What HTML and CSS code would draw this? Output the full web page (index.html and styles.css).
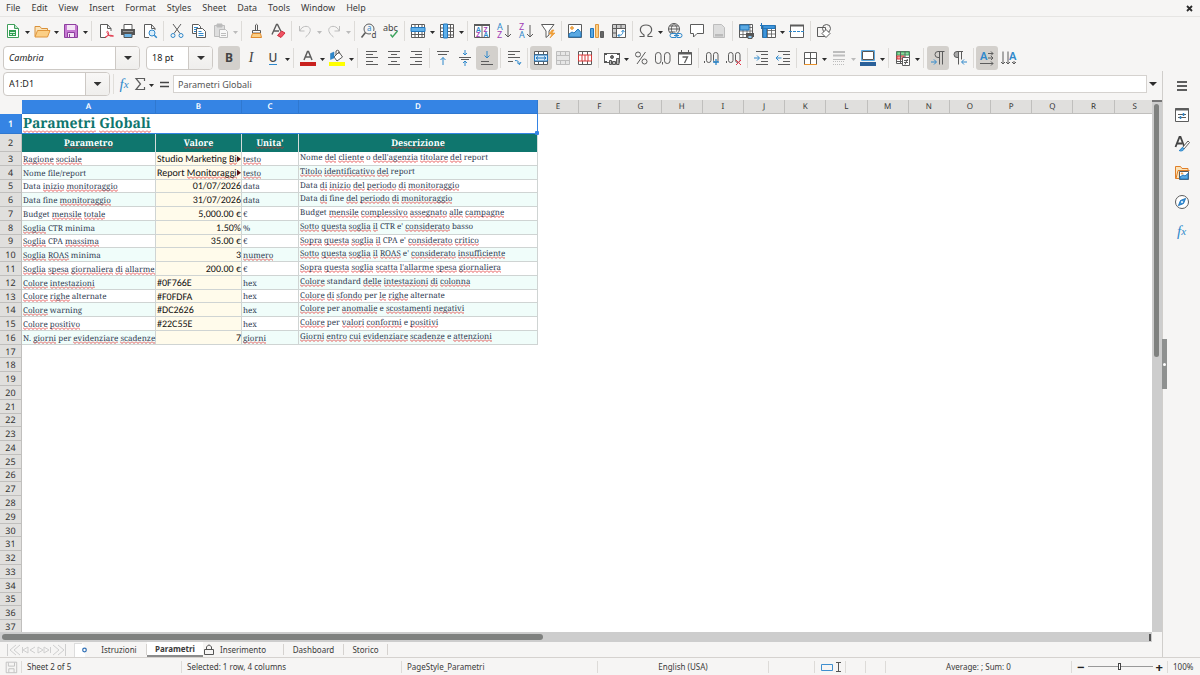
FILE: index.html
```html
<!DOCTYPE html>
<html lang="en">
<head>
<meta charset="utf-8">
<title>Parametri - Spreadsheet</title>
<link rel="stylesheet" href="styles.css">
</head>
<body>
<div class="app">
<header class="menubar">
<nav class="menus"><button>File</button><button>Edit</button><button>View</button><button>Insert</button><button>Format</button><button>Styles</button><button>Sheet</button><button>Data</button><button>Tools</button><button>Window</button><button>Help</button></nav>
<button class="close" aria-label="Close document"><svg width="7" height="7" viewBox="0 0 7 7"><path d="M1 1l5 5M6 1L1 6" stroke="#2b2b2b" stroke-width="1.8"/></svg></button>
</header>

<div class="toolbar standard">
<button class="tb" aria-label="New"><svg class="ic" viewBox="0 0 16 16"><path d="M2.500 1.500h7l4 4v9h-11z" stroke="#3f9e5a" fill="#fff"/><path d="M9.500 1.500v4h4" stroke="#3f9e5a" fill="#bfe5ca"/><path d="M4 7h7v6h-7z" fill="#2f9e50" stroke="none"/><path d="M5 9.500h5M5 11.500h2M8 11.500h2" stroke="#d7f2df"/></svg></button><button class="dd" aria-label="New options"></button>
<button class="tb" aria-label="Open"><svg class="ic" viewBox="0 0 16 16"><path d="M1 13.500V3.500h5l1.500 2h6v3" stroke="#d9913a" fill="#fbe3b9"/><path d="M1 14l2.500-6.500H16L13.500 14z" stroke="#e0963c" fill="#fbcf86"/></svg></button><button class="dd" aria-label="Open options"></button>
<button class="tb" aria-label="Save"><svg class="ic" viewBox="0 0 16 16"><path d="M1.500 1.500h11.500l1.500 1.500v11.500h-13z" stroke="#8d3f9e" fill="#c678d2"/><path d="M4 2h8v5h-8z" stroke="none" fill="#f4e4f6"/><path d="M4.500 14v-4.500h7V14" stroke="#8d3f9e" fill="#f4e4f6"/><path d="M6.500 11v3" stroke="#8d3f9e"/></svg></button><button class="dd" aria-label="Save options"></button>
<i class="sep"></i>
<button class="tb" aria-label="Export as PDF"><svg class="ic" viewBox="0 0 16 16"><path d="M8 14.500H2.500v-13h7l3.500 4V8" fill="#fff"/><path d="M9.500 1.500v4H13"/><path d="M7 14.500c3-1 4.500-4 3-6-1-.8-1.500.7-.5 2 1.500 2.500 3 3.200 6 2.500M7 14.500c2-2 5-3 8.500-1.500" stroke="#e2364a"/></svg></button>
<button class="tb" aria-label="Print"><svg class="ic" viewBox="0 0 16 16"><path d="M4 6V1.500h8V6" fill="#fff"/><path d="M1 6h14v6H1z" fill="#555" stroke="none"/><path d="M3 8.500h10" stroke="#999"/><path d="M4 10.500h8v4H4z" fill="#6db4e6" stroke="#555"/></svg></button>
<button class="tb" aria-label="Print Preview"><svg class="ic" viewBox="0 0 16 16"><path d="M7 14.500H2.500v-13h7l3.500 4V7" fill="#fff"/><path d="M9.500 1.500v4H13"/><circle cx="10" cy="10" r="3" stroke="#2f88cb" fill="#d9edfa"/><path d="M12.300 12.300l2.500 2.500" stroke="#2f88cb" stroke-width="1.500"/></svg></button>
<i class="sep"></i>
<button class="tb" aria-label="Cut"><svg class="ic" viewBox="0 0 16 16"><path d="M4 1l7 9.500M12 1L5 10.500"/><circle cx="4" cy="12.500" r="2" stroke="#2f88cb"/><circle cx="12" cy="12.500" r="2" stroke="#2f88cb"/></svg></button>
<button class="tb" aria-label="Copy"><svg class="ic" viewBox="0 0 16 16"><path d="M5 10.500H1.500v-9h6l2 2V5" fill="#fff"/><path d="M3 4.500h4M3 6.500h2M3 8.500h2" stroke="#2f88cb"/><path d="M5.500 5.500h6l3 3v6h-9z" fill="#fff"/><path d="M7.500 8.500h3M7.500 10.500h5M7.500 12.500h5" stroke="#2f88cb"/></svg></button>
<button class="tb" aria-label="Paste" disabled><svg class="ic off" viewBox="0 0 16 16"><path d="M1.500 2.500h10v11h-10z" fill="#dedede"/><path d="M4 1h5v3H4z" fill="#bbb"/><path d="M6.500 6.500h6l2 2v6h-8z" fill="#f8f8f8"/><path d="M8 10.500h5M8 12.500h5"/></svg></button><button class="dd dim" aria-label="Paste options"></button>
<i class="sep"></i>
<button class="tb" aria-label="Clone Formatting"><svg class="ic" viewBox="0 0 16 16"><path d="M7.500 7V2q1-1.500 2 0v5"/><path d="M4.500 7.500h8V10h-8z" fill="#fff"/><path d="M4.500 10.500L3 14.500h10.500l-1-4z" fill="#fbcf86" stroke="#e08a2e"/></svg></button>
<button class="tb" aria-label="Clear Formatting"><svg class="ic" viewBox="0 0 16 16"><path d="M2 11.500L6.500 1.500h1l3.500 7M4 8h5" stroke-width="1.400"/><path d="M7.500 12.500l4-4.500 3.500 2-4 4.500z" fill="#ef5363" stroke="#d02c3c"/></svg></button>
<i class="sep"></i>
<button class="tb" aria-label="Undo" disabled><svg class="ic off" viewBox="0 0 16 16"><path d="M2.500 3v5h5M3 8c2-7 12-5.500 10 .5-.7 2-2.500 4-4.500 5.500"/></svg></button><button class="dd dim" aria-label="Undo list"></button>
<button class="tb" aria-label="Redo" disabled><svg class="ic off" viewBox="0 0 16 16"><path d="M13.500 3v5h-5M13 8C11 1 1 2.500 3 8.500c.7 2 2.500 4 4.500 5.500"/></svg></button><button class="dd dim" aria-label="Redo list"></button>
<i class="sep"></i>
<button class="tb" aria-label="Find and Replace"><svg class="ic" viewBox="0 0 16 16"><circle cx="8" cy="6" r="5"/><path d="M4.500 9.500l-4 5" stroke-width="1.600"/><text x="6" y="8" class="g blue z8">a</text><rect x="10" y="8" width="6" height="8" fill="#f6f5f4" stroke="none"/><text x="10.500" y="15" class="g z8">d</text></svg></button>
<button class="tb" aria-label="Spelling"><svg class="ic" viewBox="0 0 16 16"><text x="0" y="7.500" class="g z9">abc</text><path d="M7.500 11.500l2 2.500 5-6" stroke="#3aa35c" stroke-width="1.400"/></svg></button>
<i class="sep"></i>
<button class="tb" aria-label="Row"><svg class="ic" viewBox="0 0 16 16"><path d="M1.500 1.500h13v13h-13z" fill="#fff"/><path d="M1.500 11.500h13M5 1.500v13M8.500 1.500v13M12 1.500v13"/><path d="M1 4.500h14v4H1z" fill="#5fb0ea" stroke="#2176bd"/></svg></button><button class="dd" aria-label="Row options"></button>
<button class="tb" aria-label="Column"><svg class="ic" viewBox="0 0 16 16"><path d="M1.500 1.500h13v13h-13z" fill="#fff"/><path d="M11.500 1.500v13M1.500 5h13M1.500 8.500h13M1.500 12h13"/><path d="M4.500 1h4v14h-4z" fill="#5fb0ea" stroke="#2176bd"/></svg></button><button class="dd" aria-label="Column options"></button>
<i class="sep"></i>
<button class="tb" aria-label="Sort"><svg class="ic" viewBox="0 0 16 16"><path d="M.5 1.500h15v13H.5zM8 2v12" fill="#fff"/><path d="M0 2h16" stroke-width="2"/><text x="2" y="8.500" class="g blue z7">A</text><text x="2" y="14" class="g pur z7">Z</text><text x="9.500" y="8.500" class="g pur z7">Z</text><text x="9.500" y="14" class="g blue z7">A</text></svg></button>
<button class="tb" aria-label="Sort Ascending"><svg class="ic" viewBox="0 0 16 16"><text x="1" y="7" class="g blue z9">A</text><text x="1" y="15" class="g pur z9">Z</text><path d="M12 2v12M9 11l3 3 3-3"/></svg></button>
<button class="tb" aria-label="Sort Descending"><svg class="ic" viewBox="0 0 16 16"><text x="1" y="7" class="g pur z9">Z</text><text x="1" y="15" class="g blue z9">A</text><path d="M12 2v12M9 11l3 3 3-3"/></svg></button>
<button class="tb" aria-label="AutoFilter"><svg class="ic" viewBox="0 0 16 16"><path d="M1.500 1.500h12.500L9 8v4l-3 2.500V8z" fill="#fff"/><path d="M12 7l-3 4h3l-2 4 5-5h-3l2-3z" fill="#f3a43b" stroke="#e8912a" stroke-width=".6"/></svg></button>
<i class="sep"></i>
<button class="tb" aria-label="Insert Image"><svg class="ic" viewBox="0 0 16 16"><path d="M1.500 1.500h13v13h-13z" fill="#fff"/><circle cx="5" cy="5" r="1.300" stroke="#e8912a" fill="#f7c679"/><path d="M2 14v-3l3-2 2 1 4-4 3 3.500V14z" fill="#5aa9e2" stroke="#2176bd"/></svg></button>
<button class="tb" aria-label="Insert Chart"><svg class="ic" viewBox="0 0 16 16"><path d="M1.500 5.500h3v9h-3z" fill="#5aa9e2" stroke="#2176bd"/><path d="M6.500 1.500h3v13h-3z" fill="#fbcf86" stroke="#e0963c"/><path d="M11.500 8.500h3v6h-3z" fill="#666"/></svg></button>
<button class="tb" aria-label="Insert Pivot Table"><svg class="ic" viewBox="0 0 16 16"><path d="M1.500 1.500h13v13h-13z" fill="#fff"/><path d="M2 2h12v3H2zM2 5h3v9H2z" fill="#ccc" stroke="none"/><path d="M5.500 2v12M2 5.500h12M10 2v3M2 10h3"/><path d="M7 12.500c4 0 5-1.500 5-5M10.500 9L12 7.200 13.500 9M8.500 11L7 12.500 8.500 14" stroke="#2f88cb"/></svg></button>
<i class="sep"></i>
<button class="tb" aria-label="Special Character"><svg class="ic" viewBox="0 0 16 16"><path d="M1.500 13.500H6V12C0 8 2 2 8 2s8 6 2 10v1.500h4.500" stroke-width="1.200"/></svg></button><button class="dd" aria-label="More characters"></button>
<button class="tb" aria-label="Hyperlink"><svg class="ic" viewBox="0 0 16 16"><circle cx="7" cy="6" r="5.500"/><path d="M1.500 6h11M2.500 3h9M2.500 9h6M7 .5C3.500 3 3.500 9 7 11.500M7 .5c3.500 3 3 5.500 2.500 8"/><path d="M5 10.500h4v4H5a2 2 0 010-4zM10 10.500h3a2 2 0 010 4h-3z" fill="#f6f5f4" stroke="#2f88cb"/><path d="M7 12.500h5" stroke="#2f88cb"/></svg></button>
<button class="tb" aria-label="Comment"><svg class="ic" viewBox="0 0 16 16"><path d="M1.500 1.500h13v9H8L4.500 14v-3.500h-3z" fill="#fff"/></svg></button>
<button class="tb" aria-label="Headers and Footers" disabled><svg class="ic off" viewBox="0 0 16 16"><path d="M2.500 1.500h8l3 3v10h-11z" fill="#ddd"/><path d="M4 11h8v2.500H4z" fill="#bbb" stroke="none"/></svg></button>
<i class="sep"></i>
<button class="tb" aria-label="Define Print Area"><svg class="ic" viewBox="0 0 16 16"><path d="M1.500 1.500h13v13h-13z" fill="#fff"/><path d="M1.500 8h13M1.500 11.500h13M5 1.500v13M9 1.500v13M12 1.500v13M1.500 4.500h13" stroke-width=".8"/><path d="M2 2h9v5H2z" fill="#5aa9e2" stroke="#2176bd"/><path d="M8 10h8v4H8z" fill="#555" stroke="none"/><path d="M10 12.500h4v3h-4z" fill="#8cc8f2"/></svg></button>
<button class="tb" aria-label="Freeze Rows and Columns"><svg class="ic" viewBox="0 0 16 16"><path d="M2.500 2.500h13v12h-13z" fill="#fff"/><path d="M7.500 3v12M11.500 3v12M3.500 7.500h12M3.500 11h12" stroke-width=".8"/><path d="M3 2.500h12v3H3zM3 5.500h3.500v9H3z" fill="#3f95da" stroke="#2176bd"/><path d="M1.500 0v6M0 2.500h4" stroke="#2176bd"/></svg></button><button class="dd" aria-label="Freeze options"></button>
<button class="tb" aria-label="Split Window"><svg class="ic" viewBox="0 0 16 16"><path d="M1.500 2.500h13v12h-13z" fill="#fff"/><path d="M1 2.500h14" stroke-width="2"/><path d="M0 8.500h16" stroke="#2f88cb" stroke-dasharray="3 1"/></svg></button>
<i class="sep"></i>
<button class="tb" aria-label="Show Draw Functions"><svg class="ic" viewBox="0 0 16 16"><path d="M1.500 4.500h8v9h-8z"/><circle cx="10.500" cy="5.500" r="4"/><path d="M10 6.500l4 4-4 4-4-4z" fill="#fff"/></svg></button>
</div>

<div class="toolbar format">
<label class="combo font"><select aria-label="Font Name"><option>Cambria</option></select></label>
<label class="combo size"><select aria-label="Font Size"><option>18 pt</option></select></label>
<button class="tb on" aria-label="Bold" aria-pressed="true"><b class="glyph">B</b></button>
<button class="tb" aria-label="Italic"><i class="glyph ital">I</i></button>
<button class="tb" aria-label="Underline"><span class="glyph under">U</span></button><button class="dd" aria-label="Underline options"></button>
<i class="sep"></i>
<button class="tb" aria-label="Font Color"><svg class="ic" viewBox="0 0 16 16"><path d="M4 10L7.500 1.500h1L12 10M5.500 7h5" stroke-width="1.500"/><path d="M0 12h16v4H0z" fill="#c9211e" stroke="none"/></svg></button><button class="dd" aria-label="Font Color options"></button>
<button class="tb" aria-label="Background Color"><svg class="ic" viewBox="0 0 16 16"><path d="M5 7l5-5 3.500 5L8 11z" fill="#fff"/><path d="M7 5V1q1.500-1.500 3 0v3"/><path d="M1.500 9.500V3.500L5 2v6z" fill="#2f88cb" stroke="#2176bd" stroke-width=".5"/><path d="M0 12h16v4H0z" fill="#ffff00" stroke="none"/></svg></button><button class="dd" aria-label="Background Color options"></button>
<i class="sep"></i>
<button class="tb" aria-label="Align Left"><svg class="ic" viewBox="0 0 16 16"><path d="M2 1.500h11M2 4.500h7M2 7.500h12M2 11.500h7M2 14.500h12"/></svg></button>
<button class="tb" aria-label="Center Horizontally"><svg class="ic" viewBox="0 0 16 16"><path d="M2 1.500h12M5 4.500h6M2 7.500h12M5 11.500h6M2 14.500h12"/></svg></button>
<button class="tb" aria-label="Align Right"><svg class="ic" viewBox="0 0 16 16"><path d="M3 1.500h11M7 4.500h7M2 7.500h12M7 11.500h7M2 14.500h12"/></svg></button>
<i class="sep"></i>
<button class="tb" aria-label="Align Top"><svg class="ic" viewBox="0 0 16 16"><path d="M2 1.500h12M3 4.500h9"/><path d="M8 15V7.500M5.500 10L8 7.500l2.500 2.500" class="bl"/></svg></button>
<button class="tb" aria-label="Center Vertically"><svg class="ic" viewBox="0 0 16 16"><path d="M2 7.500h12M4 9.500h8"/><path d="M8 0v5M6 3l2 2 2-2M8 16v-5M6 13l2-2 2 2" class="bl"/></svg></button>
<button class="tb on" aria-label="Align Bottom" aria-pressed="true"><svg class="ic" viewBox="0 0 16 16"><path d="M2 11.500h8M2 14.500h12"/><path d="M8 1v7M5.500 5.500L8 8l2.500-2.500" class="bl"/></svg></button>
<i class="sep"></i>
<button class="tb" aria-label="Wrap Text"><svg class="ic" viewBox="0 0 16 16"><path d="M2 1.500h12M2 4.500h7M2 7.500h12M2 11.500h5"/><path d="M9 10.500c3 0 4 1 4.500 4M11 12.500l2.500 2 1.500-2.500" class="bl"/></svg></button>
<i class="sep"></i>
<button class="tb on" aria-label="Merge and Center Cells" aria-pressed="true"><svg class="ic" viewBox="0 0 16 16"><path d="M1.500 1.500h13v13h-13zM1.500 4.500h13M1.500 11.500h13M5.500 1.500v13M10.500 1.500v13" fill="#fff"/><path d="M1.500 5h13v6h-13z" fill="#d4eafa" stroke="#2176bd"/><path d="M3 8h10M5 6.500L3 8l2 1.500M11 6.500L13 8l-2 1.500" stroke="#2176bd"/></svg></button>
<button class="tb" aria-label="Merge Cells" disabled><svg class="ic off" viewBox="0 0 16 16"><path d="M1.500 1.500h13v13h-13zM1.500 5.500h13M1.500 10.500h13M5.500 1.500v4M10.500 1.500v4M5.500 10.500v4M10.500 10.500v4" fill="#e6e6e6"/></svg></button>
<button class="tb" aria-label="Unmerge Cells"><svg class="ic" viewBox="0 0 16 16"><path d="M1.500 1.500h13v13h-13zM5.500 1.500v13M10.500 1.500v13" fill="#fff"/><path d="M1.500 5h13v6h-13zM5 5v6M8 5v6M11 5v6" fill="#fff" stroke="#d93a3a"/></svg></button>
<i class="sep"></i>
<button class="tb" aria-label="Format as Currency"><svg class="ic" viewBox="0 0 16 16"><path d="M.5 3.500h15v9H.5z" fill="#fff"/><path d="M0 3h3v2H0zM13 3h3v2h-3zM0 11h3v2H0z" fill="#555" stroke="none"/><circle cx="8" cy="7" r="1.500" fill="#666"/><path d="M5.500 10.500h2v4h-2zM8.500 11.500h3v3h-3zM12.500 8.500h2.500v6h-2.500z" fill="#bbb" stroke="#555"/></svg></button><button class="dd" aria-label="Currency options"></button>
<button class="tb" aria-label="Format as Percent"><svg class="ic" viewBox="0 0 16 16"><circle cx="5" cy="4.500" r="2.500"/><circle cx="11.500" cy="11.500" r="2.500"/><path d="M12.500 2L4 14"/></svg></button>
<button class="tb" aria-label="Format as Number"><svg class="ic" viewBox="0 0 16 16"><rect x=".5" y="2.500" width="5.500" height="11" rx="2.700"/><rect x="9.500" y="2.500" width="5.500" height="11" rx="2.700"/><path d="M7.500 12v2.500"/></svg></button>
<button class="tb" aria-label="Format as Date"><svg class="ic" viewBox="0 0 16 16"><path d="M1.500 2.500h13v12h-13z" fill="#fff"/><path d="M1 3.500h14" stroke-width="2"/><path d="M4.500 0v3M11.500 0v3"/><path d="M5.500 7h5l-3 6" stroke-width="1.300"/></svg></button>
<i class="sep"></i>
<button class="tb" aria-label="Add Decimal Place"><svg class="ic" viewBox="0 0 16 16"><path d="M.5 11v2"/><rect x="2.500" y="2.500" width="4.500" height="10" rx="2.200"/><rect x="9.500" y="2.500" width="4.500" height="10" rx="2.200"/><path d="M12 9v6M9 12h6" class="bl" stroke-width="1.300"/></svg></button>
<button class="tb" aria-label="Delete Decimal Place"><svg class="ic" viewBox="0 0 16 16"><path d="M.5 11v2"/><rect x="2.500" y="2.500" width="4.500" height="10" rx="2.200"/><rect x="9.500" y="2.500" width="4.500" height="10" rx="2.200"/><path d="M10 10l5 5M15 10l-5 5" stroke="#e2364a"/></svg></button>
<i class="sep"></i>
<button class="tb" aria-label="Increase Indent"><svg class="ic" viewBox="0 0 16 16"><path d="M3 1.500h12M8 4.500h7M8 8.500h7M8 11.500h7M3 14.500h12"/><path d="M1 8h5M4 5.500L6.500 8 4 10.500" class="bl"/></svg></button>
<button class="tb" aria-label="Decrease Indent"><svg class="ic" viewBox="0 0 16 16"><path d="M3 1.500h12M8 4.500h7M8 8.500h7M8 11.500h7M3 14.500h12"/><path d="M6.500 8H1M3.500 5.500L1 8l2.500 2.500" class="bl"/></svg></button>
<i class="sep"></i>
<button class="tb" aria-label="Borders"><svg class="ic" viewBox="0 0 16 16"><path d="M2.500 14V2.500h12V14M8.500 3v11M3 8.500h11" fill="#fff"/><path d="M2 14.500h13" stroke="#e8912a"/></svg></button><button class="dd" aria-label="Border options"></button>
<button class="tb" aria-label="Border Style" disabled><svg class="ic off" viewBox="0 0 16 16"><path d="M2 2h12M2 5.500h12" stroke-width="2"/><path d="M2 9.500h12"/><path d="M2 11.500h12M2 14.500h12" stroke-dasharray="1 1"/></svg></button><button class="dd dim" aria-label="Border Style options"></button>
<button class="tb" aria-label="Border Color"><svg class="ic" viewBox="0 0 16 16"><path d="M2.500 1.500h11v8h-11z" fill="#fff" stroke="#555"/><path d="M1.500.5h13v10h-13z" stroke="#5aa9e2"/><path d="M0 12h16v4H0z" fill="#2a6099" stroke="none"/></svg></button><button class="dd" aria-label="Border Color options"></button>
<i class="sep"></i>
<button class="tb" aria-label="Conditional"><svg class="ic" viewBox="0 0 16 16"><path d="M1.500 1.500h13v12h-13z" fill="#fff"/><path d="M2 2h12v3H2z" fill="#8fd9a0" stroke="#3aa35c"/><path d="M2 6h7v3H2z" fill="#f6a0a0" stroke="#d93a3a"/><path d="M1.500 11.500h6M5.500 1.500v12M10 1.500v6"/><path d="M7.500 7.500h7v8h-7z" fill="#fff"/><path d="M9 10.500h4M9 12.500h4M12.500 9L10 14.500"/></svg></button><button class="dd" aria-label="Conditional options"></button>
<i class="sep"></i>
<button class="tb on" aria-label="Left-To-Right" aria-pressed="true"><svg class="ic" viewBox="0 0 16 16"><path d="M14.500 1.500H8a3 3 0 000 6h1.500M9.500 1.500v13M12.500 1.500v13"/><path d="M1 12h5M4 9.500L6.500 12 4 14.500" class="bl"/></svg></button>
<button class="tb" aria-label="Right-To-Left"><svg class="ic" viewBox="0 0 16 16"><path d="M6.500 1.500H5a3 3 0 000 6h1.500z" fill="#aaa"/><path d="M5 1.500h6M6.500 1.500v13M9.500 1.500v8"/><path d="M15 12h-5M12 9.500L9.500 12l2.500 2.500" class="bl"/></svg></button>
<i class="sep"></i>
<button class="tb on" aria-label="Text direction from left to right" aria-pressed="true"><svg class="ic" viewBox="0 0 16 16"><text x="1" y="10" class="g blue z11">A</text><path d="M9 3.500h5M12 1.500l2 2-2 2M9 8h5M12 6l2 2-2 2M1 13.500h13M12 11.500l2 2-2 2"/></svg></button>
<button class="tb" aria-label="Text direction from top to bottom"><svg class="ic" viewBox="0 0 16 16"><text x="8" y="10" class="g blue z11">A</text><path d="M2 1.500v12.500M0 12l2 2 2-2M7 1.500v12.500M5 12l2 2 2-2M13 11v3M11 12l2 2 2-2"/></svg></button>
</div>

<div class="main">
<div class="work">
<div class="formulabar">
<div class="namebox"><input aria-label="Name Box" value="A1:D1"><button class="drop" aria-label="Named ranges"></button></div>
<i class="fsep"></i>
<button class="fb fx" aria-label="Function Wizard">f<small>x</small></button>
<button class="fb" aria-label="Select Function"><svg class="ic small" viewBox="0 0 12 14"><path d="M10.500 4V1.500H2L6.500 7 2 12.500h8.500V10" stroke-width="1.200"/></svg></button><button class="dd" aria-label="Function options"></button>
<button class="fb eq" aria-label="Formula"><svg width="9" height="7" viewBox="0 0 9 7"><path d="M0 1.500h9M0 5.500h9" stroke="#444" stroke-width="1.600"/></svg></button>
<input class="formula" aria-label="Input line" value="Parametri Globali">
<button class="expand" aria-label="Expand Formula Bar"></button>
</div>
<div class="sheetrow">
<div class="sheet">
<table>
<colgroup><col class="cn"><col class="ca"><col class="cb"><col class="cc"><col class="cd"><col span="15"></colgroup>
<thead><tr><th class="corner"></th><th class="sel">A</th><th class="sel">B</th><th class="sel">C</th><th class="sel">D</th><th>E</th><th>F</th><th>G</th><th>H</th><th>I</th><th>J</th><th>K</th><th>L</th><th>M</th><th>N</th><th>O</th><th>P</th><th>Q</th><th>R</th><th>S</th></tr></thead>
<tbody>
<tr class="r1"><th class="sel">1</th><td colspan="4" class="title"><u>Parametri</u> <u>Globali</u><i class="handle"></i></td><td colspan="15"></td></tr>
<tr class="r2"><th>2</th><td><u>Parametro</u></td><td><u>Valore</u></td><td><u>Unita'</u></td><td><u>Descrizione</u></td><td colspan="15" class="void"></td></tr>
<tr class="d"><th>3</th><td><u>Ragione</u> <u>sociale</u></td><td class="v cut">Studio Marketing <u>Bi</u></td><td><u>testo</u></td><td>Nome <u>del</u> <u>cliente</u> o <u>dell'agenzia</u> <u>titolare</u> <u>del</u> report</td><td colspan="15"></td></tr>
<tr class="d"><th>4</th><td>Nome file/report</td><td class="v cut">Report <u>Monitoraggi</u></td><td><u>testo</u></td><td><u>Titolo</u> <u>identificativo</u> <u>del</u> report</td><td colspan="15"></td></tr>
<tr class="d"><th>5</th><td>Data <u>inizio</u> <u>monitoraggio</u></td><td class="v n">01/07/2026</td><td>data</td><td>Data <u>di</u> <u>inizio</u> <u>del</u> <u>periodo</u> <u>di</u> <u>monitoraggio</u></td><td colspan="15"></td></tr>
<tr class="d"><th>6</th><td>Data fine <u>monitoraggio</u></td><td class="v n">31/07/2026</td><td>data</td><td>Data <u>di</u> fine <u>del</u> <u>periodo</u> <u>di</u> <u>monitoraggio</u></td><td colspan="15"></td></tr>
<tr class="d"><th>7</th><td>Budget <u>mensile</u> <u>totale</u></td><td class="v n">5,000.00 €</td><td>€</td><td>Budget <u>mensile</u> <u>complessivo</u> <u>assegnato</u> <u>alle</u> <u>campagne</u></td><td colspan="15"></td></tr>
<tr class="d"><th>8</th><td><u>Soglia</u> CTR minima</td><td class="v n">1.50%</td><td>%</td><td><u>Sotto</u> <u>questa</u> <u>soglia</u> <u>il</u> CTR e' <u>considerato</u> basso</td><td colspan="15"></td></tr>
<tr class="d"><th>9</th><td><u>Soglia</u> CPA <u>massima</u></td><td class="v n">35.00 €</td><td>€</td><td><u>Sopra</u> <u>questa</u> <u>soglia</u> <u>il</u> CPA e' <u>considerato</u> <u>critico</u></td><td colspan="15"></td></tr>
<tr class="d"><th>10</th><td><u>Soglia</u> <u>ROAS</u> minima</td><td class="v n">3</td><td><u>numero</u></td><td><u>Sotto</u> <u>questa</u> <u>soglia</u> <u>il</u> <u>ROAS</u> e' <u>considerato</u> <u>insufficiente</u></td><td colspan="15"></td></tr>
<tr class="d"><th>11</th><td><u>Soglia</u> <u>spesa</u> <u>giornaliera</u> <u>di</u> <u>allarme</u></td><td class="v n">200.00 €</td><td>€</td><td><u>Sopra</u> <u>questa</u> <u>soglia</u> <u>scatta</u> <u>l'allarme</u> <u>spesa</u> <u>giornaliera</u></td><td colspan="15"></td></tr>
<tr class="d"><th>12</th><td><u>Colore</u> <u>intestazioni</u></td><td class="v">#0F766E</td><td>hex</td><td><u>Colore</u> standard <u>delle</u> <u>intestazioni</u> <u>di</u> <u>colonna</u></td><td colspan="15"></td></tr>
<tr class="d"><th>13</th><td><u>Colore</u> <u>righe</u> alternate</td><td class="v">#F0FDFA</td><td>hex</td><td><u>Colore</u> <u>di</u> <u>sfondo</u> per <u>le</u> <u>righe</u> alternate</td><td colspan="15"></td></tr>
<tr class="d"><th>14</th><td><u>Colore</u> warning</td><td class="v">#DC2626</td><td>hex</td><td><u>Colore</u> per <u>anomalie</u> e <u>scostamenti</u> <u>negativi</u></td><td colspan="15"></td></tr>
<tr class="d"><th>15</th><td><u>Colore</u> <u>positivo</u></td><td class="v">#22C55E</td><td>hex</td><td><u>Colore</u> per <u>valori</u> <u>conformi</u> e <u>positivi</u></td><td colspan="15"></td></tr>
<tr class="d"><th>16</th><td>N. <u>giorni</u> per <u>evidenziare</u> <u>scadenze</u></td><td class="v n">7</td><td><u>giorni</u></td><td><u>Giorni</u> <u>entro</u> <u>cui</u> <u>evidenziare</u> <u>scadenze</u> e <u>attenzioni</u></td><td colspan="15"></td></tr>
<tr><th>17</th><td colspan="19"></td></tr>
<tr><th>18</th><td colspan="19"></td></tr>
<tr><th>19</th><td colspan="19"></td></tr>
<tr><th>20</th><td colspan="19"></td></tr>
<tr><th>21</th><td colspan="19"></td></tr>
<tr><th>22</th><td colspan="19"></td></tr>
<tr><th>23</th><td colspan="19"></td></tr>
<tr><th>24</th><td colspan="19"></td></tr>
<tr><th>25</th><td colspan="19"></td></tr>
<tr><th>26</th><td colspan="19"></td></tr>
<tr><th>27</th><td colspan="19"></td></tr>
<tr><th>28</th><td colspan="19"></td></tr>
<tr><th>29</th><td colspan="19"></td></tr>
<tr><th>30</th><td colspan="19"></td></tr>
<tr><th>31</th><td colspan="19"></td></tr>
<tr><th>32</th><td colspan="19"></td></tr>
<tr><th>33</th><td colspan="19"></td></tr>
<tr><th>34</th><td colspan="19"></td></tr>
<tr><th>35</th><td colspan="19"></td></tr>
<tr><th>36</th><td colspan="19"></td></tr>
<tr><th>37</th><td colspan="19"></td></tr>
</tbody>
</table>
</div>
<div class="vscroll"><div class="thumb"></div></div>
</div>
<div class="hscroll"><div class="track"><div class="thumb"></div><i class="endmark"></i></div></div>
<div class="tabs">
<div class="tabnav">
<svg class="ic nav" viewBox="0 0 60 12"><path d="M1.500 0v12M10 1L4 6l6 5M14 1L8 6l6 5M16.500 3v6M22 3l-5 3 5 3zM29 3l-5 3 5 3M32 3v6M32 3l5 3-5 3M38 3l5 3-5 3zM44.500 3v6M47 1l6 5-6 5M52 1l6 5-6 5M59.500 0v12"/></svg>
<button class="add" aria-label="Add Sheet"><svg width="14" height="14" viewBox="0 0 14 14"><path d="M0 0h8l3 3v11H0z" fill="#fff"/><path d="M.5 0v14M0 .5h8" stroke="#ddd"/><circle cx="10.500" cy="7" r="1.800" fill="none" stroke="#2f6fb5" stroke-width="1.200"/></svg></button>
</div>
<button class="tab t1">Istruzioni</button>
<button class="tab t2 active">Parametri</button>
<button class="tab t3"><svg width="10" height="12" viewBox="0 0 10 12"><path d="M.5 5.500h9v5h-9zM2.500 5V3q2.500-4 5 0v2" fill="none" stroke="#555"/></svg>Inserimento</button>
<button class="tab t4">Dashboard</button>
<button class="tab t5">Storico</button>
</div>
</div>
<aside class="sidebar">
<button class="sb" aria-label="Sidebar Settings"><svg class="ic" viewBox="0 0 16 16"><path d="M3 4h10M3 8h10M3 12h10" stroke="#2b2b2b" stroke-width="1.600"/></svg></button>
<button class="sb" aria-label="Properties"><svg class="ic" viewBox="0 0 16 16"><path d="M1.500 1.500h13v13h-13z" fill="#fff"/><path d="M1 2.500h14" stroke-width="2"/><path d="M4 7.500h8M4 10.500h8"/><path d="M9.500 6v3M6.500 9v3" class="bl" stroke-width="1.500"/></svg></button>
<button class="sb" aria-label="Styles"><svg class="ic" viewBox="0 0 16 16"><path d="M1.500 11L5.500 1h1L10 10M3 7.500h5" stroke-width="1.800" stroke="#444"/><path d="M8.500 11.500L14 5l1.500 1.500L10 13z" fill="#fff"/><path d="M5 14.500c2.500 0 1.500-3 4-3 2.500 2-1 4.500-4 3z" fill="#5aa9e2" stroke="#2f88cb"/></svg></button>
<button class="sb" aria-label="Gallery"><svg class="ic" viewBox="0 0 16 16"><path d="M5 13.500H1.500v-12h5l1.500 2h6V6" stroke="#e07f28" fill="#fbe3b9"/><path d="M2 13.500L4 5.500h11.500" stroke="#e07f28"/><path d="M5.500 6.500h9v8h-9z" fill="#fff"/><path d="M6 14v-2l3-2 2 1 3-2.500V14z" fill="#5aa9e2" stroke="#2176bd"/><circle cx="8" cy="8.500" r=".7" stroke="#e8912a"/></svg></button>
<button class="sb" aria-label="Navigator"><svg class="ic" viewBox="0 0 16 16"><circle cx="8" cy="8" r="6.500" fill="#fff"/><path d="M11.500 4.500L9.500 9.500l-5 2L6.500 6.500z" fill="#3f95da" stroke="#2176bd"/><circle cx="8" cy="8" r="1" fill="#fff" stroke="none"/></svg></button>
<button class="sb fx" aria-label="Functions">f<small>x</small></button>
<button class="grip" aria-label="Collapse sidebar"><i></i></button>
</aside>
</div>

<footer class="status">
<div class="s0"><svg class="ic off" viewBox="0 0 16 16"><path d="M2.500 2.500h12v12h-12zM5 3v4h7V3M5.500 14v-4h6v4"/></svg></div>
<div class="s1">Sheet 2 of 5</div>
<div class="s2">Selected: 1 row, 4 columns</div>
<div class="s3">PageStyle_Parametri</div>
<div class="s4">English (USA)</div>
<div class="s5"></div>
<div class="s6"><svg width="20" height="12" viewBox="0 0 20 12" fill="none"><path d="M.5 3.500h11v6H.5z" stroke="#3f8fcf"/><path d="M15 1.500h5M17.500 1.500v9M15 10.500h5" stroke="#555"/></svg></div>
<div class="s7"></div>
<div class="s8"></div>
<div class="s9">Average: ; Sum: 0</div>
<div class="s10"><button aria-label="Zoom Out">−</button><input type="range" min="0" max="100" value="49" aria-label="Zoom"><button aria-label="Zoom In">+</button></div>
<div class="s11">100%</div>
</footer>
</div>
</body>
</html>
```
FILE: styles.css
```css
* { box-sizing: border-box; }
html, body { height: 100%; }
body { margin: 0; background: #f6f5f4; color: #3a3a3a; font: 9px/12px "Noto Sans", "Open Sans", sans-serif; overflow: hidden; }
button, input, select { font: inherit; color: inherit; margin: 0; padding: 0; border: 0; background: none; }
button { flex: none; }
.app { display: flex; flex-direction: column; height: 100vh; }

.menubar { display: flex; align-items: center; justify-content: space-between; height: 17px; padding: 0 7px 0 6px; border-bottom: 1px solid #e6e5e3; flex: none; }
.menus { display: flex; gap: 11px; }
.close { display: flex; }

.toolbar { display: flex; align-items: center; flex: none; padding-left: 2px; }
.standard { height: 28px; }
.format { height: 26px; }
.tb { display: flex; align-items: center; justify-content: center; width: 22px; height: 24px; border-radius: 3px; }
.tb.on { background: #d3d0cc; }
.ic { width: 16px; height: 16px; fill: none; stroke: #5c5c5c; stroke-width: 1; display: block; flex: none; overflow: visible; }
.ic.off { stroke: #bdbdbd; }
.ic.small { width: 12px; height: 14px; }
.ic .bl { stroke: #2f88cb; }
.g { fill: #444; stroke: none; font-family: "Noto Sans", sans-serif; }
.g.blue { fill: #2f88cb; }
.g.pur { fill: #a13cb4; }
.z7 { font-size: 7px; font-weight: 600; }
.z8 { font-size: 8px; }
.z9 { font-size: 9px; }
.z11 { font-size: 11px; font-weight: 600; }
.dd { width: 7px; height: 24px; }
.dd::after { content: ""; display: block; width: 5px; height: 3px; margin: 3px auto 0; background: #2b2b2b; clip-path: polygon(0 0, 100% 0, 50% 100%); }
.dd.dim::after { background: #bbb; }
.sep { width: 5px; height: 20px; flex: none; background: linear-gradient(#dddbd8, #dddbd8) 2px 0 / 1px 100% no-repeat; }
.dd + .sep { width: 6px; }
.glyph { font-size: 12px; line-height: 16px; color: #444; }
.ital { font-family: "Liberation Serif", serif; font-size: 14px; }
.under { border-bottom: 1px solid #2f88cb; line-height: 13px; font-weight: 500; }

.combo { position: relative; display: block; height: 24px; border: 1px solid #cdc9c5; border-radius: 4px; background: #fff; overflow: hidden; flex: none; }
.combo select { appearance: none; width: 100%; height: 100%; padding-left: 5px; color: #222; }
.combo::before { content: ""; position: absolute; right: 0; top: 0; width: 23px; height: 100%; background: linear-gradient(#f8f7f6, #efeeec); border-left: 1px solid #cdc9c5; pointer-events: none; }
.combo::after { content: ""; position: absolute; right: 7px; top: 9px; width: 8px; height: 4px; background: #333; clip-path: polygon(0 0, 100% 0, 50% 100%); pointer-events: none; }
.combo.font { width: 137px; margin-left: 1px; margin-right: 6px; font-style: italic; }
.combo.size { width: 67px; margin-right: 5px; }

.main { flex: 1; min-height: 0; display: flex; }
.work { flex: 1; min-width: 0; display: flex; flex-direction: column; }
.formulabar { display: flex; align-items: center; height: 29px; padding: 0 5px 3px 3px; flex: none; }
.namebox { display: flex; width: 107px; height: 24px; border: 1px solid #cdc9c5; border-radius: 4px; background: #fff; overflow: hidden; }
.namebox input { flex: 1; min-width: 0; padding-left: 5px; color: #222; }
.drop { width: 24px; background: linear-gradient(#f8f7f6, #efeeec); border-left: 1px solid #cdc9c5; }
.drop::after { content: ""; display: block; width: 8px; height: 4px; margin: 0 auto; background: #333; clip-path: polygon(0 0, 100% 0, 50% 100%); }
.fsep { width: 1px; height: 20px; margin: 0 2px 0 3px; background: #e0deda; }
.fb { width: 16px; display: flex; justify-content: center; align-items: center; }
.fx { color: #2f88cb; font: italic 15px/16px "Liberation Serif", serif; }
.fx small { font-size: 11px; }
.fb.eq { width: 18px; }
.formula { flex: 1; min-width: 0; height: 18px; border: 1px solid #d5d2cf; background: #fff; padding-left: 4px; color: #555; }
.expand { width: 8px; height: 4px; margin-left: 2px; background: #2b2b2b; clip-path: polygon(0 0, 100% 0, 50% 100%); }

.sheetrow { flex: 1; min-height: 0; display: flex; }
.sheet { flex: 1; min-width: 0; overflow: hidden; background: #fff; }
table { width: calc(100% + 4px); height: calc(100% + 2px); table-layout: fixed; border-collapse: separate; border-spacing: 0; text-rendering: geometricPrecision; }
.cn { width: 22px; } .ca { width: 134px; } .cb { width: 86px; } .cc { width: 57px; } .cd { width: 239px; }
th, td { padding: 0; }
th { font-weight: 400; font-size: 9px; line-height: 11px; background: #e0dfdd; border-right: 1px solid #c0bfbd; border-bottom: 1px solid #c0bfbd; color: #333; }
thead th { height: 14px; font-size: 8px; }
th.corner { background: #f6f5f4; border-color: #f6f5f4; }
th.sel { background: #3584e4; color: #fff; font-weight: 600; border-color: #2f78d0; }
u { text-decoration: none; background: url("data:image/svg+xml,%3Csvg xmlns='http://www.w3.org/2000/svg' width='4' height='3'%3E%3Cpath d='M0 .5L2 2.500L4 .5' fill='none' stroke='%23e02b2b' stroke-width='.8'/%3E%3C/svg%3E") 0 100% / 4px 3px repeat-x; }
td { font: 8px/10px "Noto Serif", "DejaVu Serif", serif; white-space: nowrap; text-align: left; }
.r1 > * { height: 20px; }
.r2 > * { height: 18px; }
.title { position: relative; font-size: 14px; line-height: 18px; font-weight: 700; color: #0f766e; border-right: 1px solid #3584e4; border-bottom: 1px solid #3584e4; padding-left: 1px; }
.handle { position: absolute; right: -2px; bottom: -2px; width: 4px; height: 4px; border-radius: 1px; background: #3584e4; }
.r2 td { background: #0f766e; color: #fff; text-align: center; font-weight: 700; font-size: 9px; border-right: 1px solid #d5dcdb; }
.r2 td.void { background: none; border: 0; }
.d td { vertical-align: bottom; border-right: 1px solid #cfd4d3; border-bottom: 1px solid #cfd4d3; padding-left: 1px; color: #334155; }
.d td:nth-child(5) { vertical-align: top; padding-top: 1px; }
.d td:last-child { border: 0; background: none; }
.d:nth-child(even) td:not(:last-child) { background: #f0fdfa; }
.d td.v:not(:last-child) { background: #fffbeb; color: #111; font: 10px/11px Carlito, Lato, sans-serif; vertical-align: middle; }
.d td.n { text-align: right; }
.d td.cut { position: relative; overflow: hidden; }
.cut::after { content: ""; position: absolute; right: 0; top: 4px; width: 4px; height: 6px; background: #5a1010; clip-path: polygon(0 0, 100% 50%, 0 100%); }

.vscroll { width: 10px; padding: 2px 3px 0 2px; background: #cdcdcd; border-top: 2px solid #777; flex: none; }
.vscroll .thumb { height: 48%; border-radius: 3px; background: #7f817f; }
.hscroll { height: 10px; padding-right: 10px; flex: none; }
.track { display: flex; align-items: center; justify-content: space-between; height: 100%; padding-left: 2px; background: #cdcdcd; }
.hscroll .thumb { width: 47%; height: 6px; border-radius: 3px; background: #7f817f; }
.endmark { width: 2px; height: 7px; margin-right: 1px; background: #555; }

.tabs { display: flex; height: 15px; flex: none; }
.tabnav { display: flex; align-items: center; width: 92px; padding-left: 6px; gap: 8px; }
.nav { width: 60px; height: 12px; stroke: #cfcfcf; }
.add { display: flex; }
.tab { display: flex; align-items: center; justify-content: center; height: 11px; margin-top: 2px; font-size: 8px; gap: 6px; border-right: 1px solid #d5d2cf; }
.t1 { width: 55px; }
.tab.active { width: 56px; height: 15px; margin: 0; font-weight: 700; background: #fff; border: 0; border-bottom: 2px solid #8b8b8b; }
.t3 { width: 81px; justify-content: flex-start; padding-left: 1px; }
.t4 { width: 60px; }
.t5 { width: 44px; }

.sidebar { position: relative; width: 38px; display: flex; flex-direction: column; align-items: center; border-left: 1px solid #d0cecb; flex: none; }
.sb { display: flex; align-items: center; justify-content: center; width: 24px; height: 29px; }
.grip { position: absolute; left: -1px; top: 50%; width: 5px; height: 50px; margin-top: -25px; background: #8f9190; }
.grip i { display: block; width: 3px; height: 3px; margin: 0 1px; border-radius: 2px; background: #fff; }

.status { display: flex; height: 18px; align-items: center; border-top: 1px solid #d5d2cf; font-size: 8px; flex: none; }
.status > div { display: flex; align-items: center; height: 12px; border-right: 1px solid #dddbd8; white-space: nowrap; flex: none; }
.status .ic { width: 14px; height: 14px; }
.s0 { width: 22px; padding-left: 4px; }
.s1 { width: 160px; padding-left: 5px; }
.s2 { width: 220px; padding-left: 5px; }
.s3 { width: 196px; padding-left: 5px; }
.status .s4 { flex: 1; justify-content: center; }
.s5 { width: 46px; }
.s6 { width: 31px; padding-left: 6px; }
.s7, .s8 { width: 20px; }
.s9 { width: 186px; justify-content: center; }
.s10 { width: 96px; padding: 0 4px 0 5px; gap: 3px; }
.s10 button { font: 700 13px/12px "Noto Sans", sans-serif; color: #222; }
.s10 input { appearance: none; flex: 1; min-width: 0; height: 10px; background: linear-gradient(#999, #999) 0 50% / 100% 1px no-repeat; }
.s10 input::-webkit-slider-thumb { appearance: none; width: 3px; height: 7px; border: 1px solid #444; background: #fff; }
.status .s11 { width: 32px; border: 0; padding-left: 5px; }
```
